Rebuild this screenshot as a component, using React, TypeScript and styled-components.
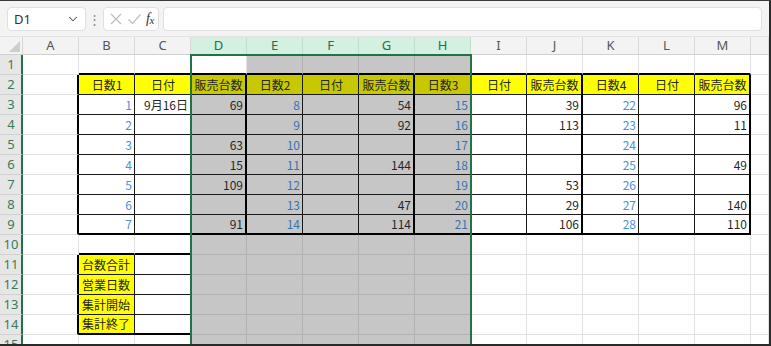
import React from "react";
import styled, { createGlobalStyle } from "styled-components";
import { ChevronDown } from "lucide-react";

const GlobalStyle = createGlobalStyle`
  html, body {
    margin: 0;
    padding: 0;
    background: #fff;
  }
  body {
    font-family: "Noto Sans", "Noto Sans CJK JP", sans-serif;
  }
`;

const COL_W = 56;
const HEAD_W = 23;
const LETTERS = ["A", "B", "C", "D", "E", "F", "G", "H", "I", "J", "K", "L", "M", ""];

const HEADERS = ["日数1", "日付", "販売台数", "日数2", "日付", "販売台数", "日数3", "日付", "販売台数", "日数4", "日付", "販売台数"];

// rows 3..9, columns B..M
const DATA: (string | number | null)[][] = [
  [1, "9月16日", 69, 8, null, 54, 15, null, 39, 22, null, 96],
  [2, null, null, 9, null, 92, 16, null, 113, 23, null, 11],
  [3, null, 63, 10, null, null, 17, null, null, 24, null, null],
  [4, null, 15, 11, null, 144, 18, null, null, 25, null, 49],
  [5, null, 109, 12, null, null, 19, null, 53, 26, null, null],
  [6, null, null, 13, null, 47, 20, null, 29, 27, null, 140],
  [7, null, 91, 14, null, 114, 21, null, 106, 28, null, 110],
];

const SUMMARY = ["台数合計", "営業日数", "集計開始", "集計終了"];

type Edge = "grid" | "thin" | "thick";

const Frame = styled.div`
  width: 771px;
  height: 346px;
  box-sizing: border-box;
  border-top: 1px solid #3a3a3a;
  border-right: 2px solid #2a2a2a;
  border-bottom: 2px solid #2a2a2a;
  overflow: hidden;
  background: #fff;
  display: flex;
  flex-direction: column;
`;

const Toolbar = styled.div`
  height: 36px;
  flex: none;
  display: flex;
  align-items: center;
  padding: 1px 7px 0 7px;
  box-sizing: border-box;
  background: #f3f3f3;
  border-bottom: 1px solid #e3e3e3;
`;

const NameBox = styled.div`
  width: 79px;
  height: 24px;
  box-sizing: border-box;
  background: #fff;
  border: 1px solid #e0e0e0;
  border-radius: 4px;
  display: flex;
  align-items: center;
  justify-content: space-between;
  padding: 0 5px 0 6px;
  font-size: 13px;
  color: #333;
`;

const Dots = styled.div`
  width: 17px;
  text-align: center;
  color: #8a8a8a;
  font-size: 13px;
  line-height: 1;
`;

const FxBox = styled.div`
  width: 56px;
  height: 24px;
  box-sizing: border-box;
  background: #fff;
  border: 1px solid #e0e0e0;
  border-radius: 4px;
  display: flex;
  align-items: center;
  gap: 4px;
  padding: 0 4px 0 5px;
`;

const Fx = styled.span`
  font-family: "Liberation Serif", serif;
  font-style: italic;
  font-size: 14px;
  color: #333;
  letter-spacing: -0.5px;
  sub {
    font-size: 11px;
    vertical-align: -1px;
  }
`;

const FormulaInput = styled.div`
  flex: 1;
  height: 24px;
  margin-left: 4px;
  box-sizing: border-box;
  background: #fff;
  border: 1px solid #e0e0e0;
  border-radius: 4px;
`;

const Sheet = styled.div`
  position: relative;
  display: grid;
  grid-template-columns: ${HEAD_W}px repeat(13, ${COL_W}px) 1fr;
  grid-template-rows: 18px repeat(15, 20px);
`;

const Corner = styled.div`
  background: #f3f3f3;
  border-right: 1px solid #d6d6d6;
  border-bottom: 1px solid #d0d0d0;
  box-sizing: border-box;
  display: flex;
  align-items: flex-end;
  justify-content: flex-end;
  padding: 0 2px 2px 0;
`;

const ColHead = styled.div<{ $active: boolean }>`
  box-sizing: border-box;
  background: ${(p) => (p.$active ? "#d3f0e0" : "#f3f3f3")};
  color: ${(p) => (p.$active ? "#1e7145" : "#555")};
  border-right: 1px solid ${(p) => (p.$active ? "#bfe0cc" : "#dadada")};
  border-bottom: 1px solid #d0d0d0;
  font-size: 13px;
  line-height: 17px;
  text-align: center;
`;

const RowHead = styled.div`
  box-sizing: border-box;
  background: #e6e6e6;
  color: #3b7b58;
  border-right: 2px solid #217346;
  border-bottom: 1px solid #d2d2d2;
  font-size: 13px;
  line-height: 19px;
  text-align: center;
  padding-left: 1px;
`;

const Cell = styled.div<{
  $bg: string;
  $right: string;
  $bottom: string;
  $align: string;
  $color: string;
}>`
  box-sizing: border-box;
  background: ${(p) => p.$bg};
  border-right: ${(p) => p.$right};
  border-bottom: ${(p) => p.$bottom};
  color: ${(p) => p.$color};
  display: flex;
  align-items: center;
  justify-content: ${(p) => p.$align};
  padding: 0 2px 0 3px;
  font-family: "Noto Sans CJK JP", sans-serif;
  font-size: 12px;
  line-height: 18px;
  white-space: nowrap;
  overflow: hidden;
`;

const Selection = styled.div`
  position: absolute;
  left: ${HEAD_W + 3 * COL_W - 1}px;
  top: 17px;
  width: ${5 * COL_W + 2}px;
  height: 400px;
  box-sizing: border-box;
  border: 2px solid #217346;
  pointer-events: none;
`;

const isTable = (r: number) => r >= 2 && r <= 9;
const isBlock = (r: number) => r >= 11 && r <= 14;
const isSel = (r: number, c: number) => c >= 3 && c <= 7 && !(c === 3 && r === 1);

function rightEdge(r: number, c: number): Edge {
  if (isTable(r)) {
    if ([0, 3, 6, 9, 12].includes(c)) return "thick";
    if (c >= 1 && c <= 11) return "thin";
  }
  if (isBlock(r)) {
    if (c === 0) return "thick";
    if (c === 1 || c === 2) return "thin";
  }
  return "grid";
}

function bottomEdge(r: number, c: number): Edge {
  if (c >= 1 && c <= 12) {
    if (r === 1 || r === 9) return "thick";
    if (r >= 2 && r <= 8) return "thin";
  }
  if (c === 1 || c === 2) {
    if (r === 10 || r === 14) return "thick";
    if (r >= 11 && r <= 13) return "thin";
  }
  return "grid";
}

function edgeCss(e: Edge, sel: boolean) {
  if (e === "thick") return "2px solid #000";
  if (e === "thin") return "1px solid #1a1a1a";
  return `1px solid ${sel ? "#b2b2b2" : "#e2e2e2"}`;
}

function cellInfo(r: number, c: number) {
  const sel = isSel(r, c);
  let text: string | number | null = null;
  let align = "flex-end";
  let yellow = false;
  let blue = false;

  if (r === 2 && c >= 1 && c <= 12) {
    text = HEADERS[c - 1];
    align = "center";
    yellow = true;
  } else if (r >= 3 && r <= 9 && c >= 1 && c <= 12) {
    text = DATA[r - 3][c - 1];
    blue = [1, 4, 7, 10].includes(c);
  } else if (isBlock(r) && c === 1) {
    text = SUMMARY[r - 11];
    align = "flex-start";
    yellow = true;
  }

  let bg = "#fff";
  if (yellow) bg = sel ? "#c8c800" : "#ffff00";
  else if (sel) bg = "#c6c6c6";

  let color = "#262626";
  if (blue) color = sel ? "#3a74ae" : "#4b90d8";

  return { sel, text, align, bg, color };
}

export default function App() {
  const rows = Array.from({ length: 15 }, (_, i) => i + 1);

  return (
    <>
      <GlobalStyle />
      <Frame>
        <Toolbar>
          <NameBox>
            <span>D1</span>
            <ChevronDown size={14} color="#555" strokeWidth={1.8} />
          </NameBox>
          <Dots>⋮</Dots>
          <FxBox>
            <svg width="14" height="14" viewBox="0 0 14 14">
              <path d="M2 2 L12 12 M12 2 L2 12" stroke="#bdbdbd" strokeWidth="1.2" fill="none" />
            </svg>
            <svg width="15" height="14" viewBox="0 0 15 14">
              <path d="M1.5 7.5 L5.5 11.5 L13.5 2.5" stroke="#bdbdbd" strokeWidth="1.2" fill="none" />
            </svg>
            <Fx>
              f<sub>x</sub>
            </Fx>
          </FxBox>
          <FormulaInput />
        </Toolbar>

        <Sheet>
          <Corner>
            <svg width="11" height="11" viewBox="0 0 11 11">
              <path d="M11 0 L11 11 L0 11 Z" fill="#cdcdcd" />
            </svg>
          </Corner>
          {LETTERS.map((l, c) => (
            <ColHead key={`h${c}`} $active={c >= 3 && c <= 7}>
              {l}
            </ColHead>
          ))}

          {rows.map((r) => (
            <React.Fragment key={r}>
              <RowHead>{r}</RowHead>
              {LETTERS.map((_, c) => {
                const info = cellInfo(r, c);
                return (
                  <Cell
                    key={c}
                    $bg={info.bg}
                    $right={edgeCss(rightEdge(r, c), info.sel)}
                    $bottom={edgeCss(bottomEdge(r, c), info.sel)}
                    $align={info.align}
                    $color={info.color}
                  >
                    {info.text}
                  </Cell>
                );
              })}
            </React.Fragment>
          ))}

          <Selection />
        </Sheet>
      </Frame>
    </>
  );
}
